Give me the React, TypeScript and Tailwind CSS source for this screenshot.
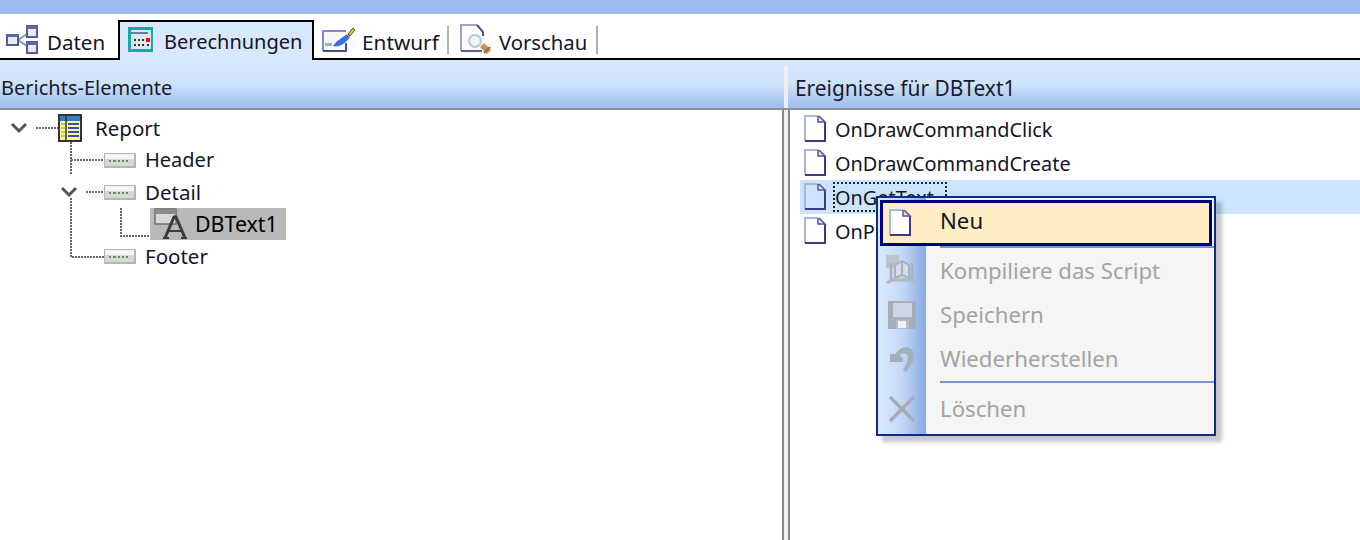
import React from "react";

const Doc = ({ fill = "#ffffff" }: { fill?: string }) => (
  <svg width="24" height="30" viewBox="0 0 24 30" className="shrink-0">
    <path d="M2 2H16L22 8V27H2Z" fill={fill} />
    <path d="M2 27V2H15" fill="none" stroke="#a9b6de" strokeWidth="2" />
    <path d="M2 27H22V8" fill="none" stroke="#3c3a80" strokeWidth="2" />
    <path d="M15 2V8H22L16 2" fill="#dfe4f4" stroke="#56549a" strokeWidth="1.5" />
  </svg>
);

const Band = () => (
  <svg width="32" height="15" viewBox="0 0 32 15" className="shrink-0">
    <rect x="0" y="0" width="32" height="15" fill="#b5b5b5" />
    <rect x="1" y="1" width="29" height="5" fill="#f4f4f4" />
    <rect x="1" y="6" width="29" height="7" fill="#cfe0c8" />
    <path d="M5 8h2M9 8h3M14 8h2M18 8h2M22 8h2" stroke="#777" strokeWidth="2" />
  </svg>
);

const Chevron = () => (
  <svg width="18" height="12" viewBox="0 0 18 12" className="shrink-0">
    <path d="M2 2L9 9L16 2" fill="none" stroke="#555" strokeWidth="3" />
  </svg>
);

const Dots = ({ w }: { w: number }) => (
  <svg width={w} height="2" className="shrink-0">
    <line x1="0" y1="1" x2={w} y2="1" stroke="#666" strokeWidth="2" strokeDasharray="2 1" />
  </svg>
);

const DaTen = () => (
  <svg width="32" height="30" viewBox="0 0 32 30" className="shrink-0">
    <path d="M12 15L21 9M12 15L21 21" stroke="#8a94b8" strokeWidth="2" fill="none" />
    <rect x="1" y="10" width="11" height="10" fill="#e8ecf6" stroke="#555a9c" strokeWidth="2" />
    <rect x="1" y="9" width="12" height="3" fill="#5b65ad" />
    <rect x="21" y="1" width="10" height="11" fill="#e8ecf6" stroke="#555a9c" strokeWidth="2" />
    <rect x="20" y="1" width="12" height="3" fill="#5b65ad" />
    <rect x="21" y="17" width="10" height="11" fill="#e8ecf6" stroke="#555a9c" strokeWidth="2" />
    <rect x="20" y="17" width="12" height="3" fill="#5b65ad" />
  </svg>
);

const Calc = () => (
  <svg width="26" height="26" viewBox="0 0 26 26" className="shrink-0">
    <rect x="0" y="0" width="25" height="25" fill="#14a8a8" />
    <rect x="3" y="3" width="20" height="19" fill="#dfe7ee" />
    <rect x="3" y="5" width="17" height="2" fill="#6a7aa8" />
    <path d="M6 13h2M10 13h2M14 13h2M6 18h2M10 18h2M14 18h2" stroke="#333" strokeWidth="2" />
    <rect x="18" y="11" width="4" height="4" fill="#f01010" />
    <path d="M19 18h2" stroke="#333" strokeWidth="2" />
  </svg>
);

const Pen = () => (
  <svg width="34" height="26" viewBox="0 0 34 26" className="shrink-0">
    <path d="M1 24V4H24" fill="#f5f7fc" stroke="#7a8ad8" strokeWidth="2" />
    <path d="M1 24H24V16" fill="none" stroke="#4a4a98" strokeWidth="2" />
    <rect x="3" y="16" width="7" height="3" fill="#8cc0a0" />
    <path d="M11 19C14 14 20 11 25 7L28 10C25 15 18 21 11 19Z" fill="#3f6fd8" />
    <path d="M26 7L31 1L33 3L28 9Z" fill="#e8b840" stroke="#6a4a20" strokeWidth="1" />
  </svg>
);

const Preview = () => (
  <svg width="32" height="32" viewBox="0 0 32 32" className="shrink-0">
    <path d="M1 1H17V27H1Z" fill="#fcfcff" />
    <path d="M1 27V1H17" fill="none" stroke="#a0a0cc" strokeWidth="2" />
    <path d="M1 27H22" fill="none" stroke="#5a5a9c" strokeWidth="2" />
    <path d="M17 1L23 8V12" fill="none" stroke="#4a4a90" strokeWidth="2" />
    <circle cx="15" cy="17" r="6" fill="#eef6ee" stroke="#b4c8d4" strokeWidth="2" />
    <path d="M22 21L29 28" stroke="#d89038" strokeWidth="6" />
    <path d="M24 29L30 23" stroke="#807060" strokeWidth="2" />
  </svg>
);

const ReportIcon = () => (
  <svg width="24" height="28" viewBox="0 0 24 28" className="shrink-0">
    <rect x="1" y="1" width="22" height="26" fill="#fff6a0" stroke="#333" strokeWidth="2" />
    <rect x="2" y="2" width="20" height="5" fill="#2f7fc8" />
    <path d="M8 1V27" stroke="#333" strokeWidth="1.5" />
    <path d="M3 10H7M3 14H7M3 18H7M3 22H7" stroke="#d8c840" strokeWidth="2" />
    <path d="M10 10H21M10 14H21M10 18H21M10 22H21" stroke="#3050b0" strokeWidth="2" />
  </svg>
);

const TextIcon = () => (
  <svg width="34" height="32" viewBox="0 0 34 32" className="shrink-0">
    <rect x="1" y="1" width="21" height="15" fill="#d8d8d8" stroke="#6e6e6e" strokeWidth="1.5" />
    <rect x="2" y="2" width="19" height="4" fill="#8a8a8a" />
    <path d="M11 30L20 9H22L31 30" fill="none" stroke="#3a3a3a" strokeWidth="3" />
    <path d="M15 23H27" stroke="#3a3a3a" strokeWidth="2" />
    <path d="M9 30H15M27 30H33" stroke="#3a3a3a" strokeWidth="2" />
  </svg>
);

const CompileIcon = () => (
  <svg width="32" height="32" viewBox="0 0 32 32" className="shrink-0">
    <rect x="0" y="0" width="13" height="13" fill="#bcc4d2" />
    <path d="M5 8V25H26V8" fill="none" stroke="#a8b0bc" strokeWidth="2.5" />
    <path d="M9 10L16 6L23 10V23L16 20L9 23Z" fill="#d6dce6" stroke="#a8b0bc" strokeWidth="2" />
    <path d="M16 6V20" stroke="#a8b0bc" strokeWidth="2" />
    <path d="M1 28L6 25H25L30 28" fill="none" stroke="#b0b7c2" strokeWidth="3" />
  </svg>
);

const SaveIcon = () => (
  <svg width="28" height="28" viewBox="0 0 28 28" className="shrink-0">
    <rect x="0" y="0" width="28" height="28" fill="#a6aebb" />
    <rect x="5" y="2" width="19" height="14" fill="#cdd7e8" />
    <rect x="8" y="19" width="13" height="9" fill="#b6bcc8" />
    <rect x="10" y="20" width="8" height="7" fill="#eef1f6" />
  </svg>
);

const UndoIcon = () => (
  <svg width="26" height="28" viewBox="0 0 26 28" className="shrink-0">
    <path d="M10 5C16 0 25 2 25 11C25 17 21 22 17 27L14 25C16 21 19 17 19 12C19 8 14 7 11 10L14 13V17H1V9L6 9Z" fill="#a6aebb" />
  </svg>
);

const XIcon = () => (
  <svg width="26" height="26" viewBox="0 0 26 26" className="shrink-0">
    <path d="M1 1L25 25M25 1L1 25" stroke="#a4acb8" strokeWidth="3.5" />
  </svg>
);

const Sep = () => <div className="w-0.5 h-7 bg-[#b4b0a4]" />;

const PanelHeader = ({ children, className = "" }: { children: React.ReactNode; className?: string }) => (
  <div className={`h-[50px] pt-[8px] flex items-center border-b-2 border-[#8a8f99] bg-gradient-to-b from-[#d9e9fd] via-[#cee2fb] to-[#9dbcec] text-[#1a1a2e] ${className}`}>
    {children}
  </div>
);

const EventRow = ({ label, active, focus }: { label: string; active?: boolean; focus?: boolean }) => (
  <div className={`h-[34px] flex items-center pl-[3px] gap-[8px] ${active ? "bg-[#cce5fd]" : ""}`}>
    <Doc fill={active ? "#cce5fd" : "#ffffff"} />
    <span className={focus ? "h-[30px] w-[114px] flex items-center border-2 border-dotted border-[#222] -ml-0.5 pt-[2px]" : "mt-[2px]"}>{label}</span>
  </div>
);

const MenuItem = ({ icon, label, className = "" }: { icon: React.ReactNode; label: string; className?: string }) => (
  <div className={`flex items-center ${className}`}>
    <div className="w-[48px] flex justify-center">{icon}</div>
    <span className="ml-[14px] text-[#a3a3a3]">{label}</span>
  </div>
);

export default function App() {
  return (
    <div
      className="w-[1360px] h-[540px] overflow-hidden bg-white flex flex-col text-[20px] leading-none text-[#14142a]"
      style={{ fontFamily: '"Noto Sans", "Open Sans", sans-serif' }}
    >
      <div className="h-[14px] shrink-0 bg-[#9ebcf0] border-b border-[#b5b9c2]" />

      <div className="h-[46px] shrink-0 flex items-end border-b-2 border-black pl-[6px]">
        <div className="w-[112px] h-[30px] mb-[3px] flex items-center gap-[9px]">
          <DaTen />
          <span className="mt-[4px] text-[20.5px]">Daten</span>
        </div>
        <div className="-mb-[2px] h-[40px] w-[196px] flex items-center gap-[10px] pl-[8px] pb-[2px] border-2 border-b-0 border-black bg-[#d9e9fd]">
          <Calc />
          <span className="mt-[4px]">Berechnungen</span>
        </div>
        <div className="h-[30px] mb-[3px] ml-[8px] flex items-center">
          <Pen />
          <span className="ml-[6px] mt-[4px] text-[20.8px]">Entwurf</span>
          <div className="ml-[8px] mr-[11px]"><Sep /></div>
          <Preview />
          <span className="ml-[7px] mt-[4px] text-[20.3px]">Vorschau</span>
          <div className="ml-[9px]"><Sep /></div>
        </div>
      </div>

      <div className="flex-1 flex min-h-0">
        <div className="w-[782px] shrink-0 flex flex-col">
          <PanelHeader className="pl-px">Berichts-Elemente</PanelHeader>
          <div className="relative pt-[2px]">
            <svg className="absolute left-0 top-0" width="200" height="160">
              <path d="M71 32V64M71 88V147H104M121 98V126H152" fill="none" stroke="#666" strokeWidth="2" strokeDasharray="2 1" />
              <path d="M71 50H104" fill="none" stroke="#666" strokeWidth="2" strokeDasharray="2 1" />
            </svg>
            <div className="relative h-[32px] flex items-center pl-[10px]">
              <Chevron />
              <div className="ml-[8px]"><Dots w={22} /></div>
              <ReportIcon />
              <span className="ml-[13px] text-[20.5px]">Report</span>
            </div>
            <div className="relative h-[32px] flex items-center pl-[104px]">
              <Band />
              <span className="ml-[9px]">Header</span>
            </div>
            <div className="relative h-[32px] flex items-center pl-[60px]">
              <Chevron />
              <div className="ml-[8px]"><Dots w={18} /></div>
              <Band />
              <span className="ml-[9px] text-[20.5px]">Detail</span>
            </div>
            <div className="relative h-[32px] flex items-center pl-[150px]">
              <div className="w-[136px] h-[32px] bg-[#b9b9b9] flex items-center pl-[4px] text-black">
                <TextIcon />
                <span className="ml-[7px] text-[21.4px]">DBText1</span>
              </div>
            </div>
            <div className="relative h-[32px] flex items-center pl-[104px]">
              <Band />
              <span className="ml-[9px] text-[20.5px]">Footer</span>
            </div>
          </div>
        </div>

        <div className="w-[8px] shrink-0 flex flex-col">
          <div className="h-[50px] flex justify-center border-b-2 border-[#8a8f99] bg-gradient-to-b from-[#d9e9fd] via-[#cee2fb] to-[#9dbcec]">
            <div className="w-[4px] mt-[6px] bg-[#eef0f4]" />
          </div>
          <div className="flex-1 flex">
            <div className="w-[2px] bg-[#8a8a8a]" />
            <div className="w-[4px] bg-[#f2f2f2]" />
            <div className="w-[2px] bg-[#8a8a8a]" />
          </div>
        </div>

        <div className="flex-1 flex flex-col relative">
          <PanelHeader className="pl-[5px] text-[20.9px]">Ereignisse für DBText1</PanelHeader>
          <div className="pt-[2px] pl-[10px] leading-none text-[19.9px]">
            <EventRow label="OnDrawCommandClick" />
            <EventRow label="OnDrawCommandCreate" />
            <EventRow label="OnGetText" active focus />
            <EventRow label="OnPrint" />
          </div>

          <div className="absolute left-[86px] top-[136px] w-[340px] h-[240px] border-2 border-[#0a2d8f] bg-[#f5f5f5] shadow-[6px_6px_4px_rgba(0,0,0,0.22)] flex flex-col text-[22.2px]">
            <div className="absolute left-0 top-0 bottom-0 w-[48px] bg-gradient-to-r from-[#dcebfd] via-[#c3d8f6] to-[#86a9e2]" />
            <div className="relative mx-0.5 mt-0.5 h-[46px] shrink-0 bg-[#ffeec4] border-[3px] border-[#000080] flex items-center pb-[4px] text-[#14142a]">
              <div className="ml-[5px] mt-[4px]"><Doc /></div>
              <span className="ml-[28px]">Neu</span>
            </div>
            <div className="relative h-0.5 shrink-0 ml-[62px] bg-[#7b93cc]" />
            <div className="relative pt-[1px]">
              <MenuItem className="h-[44px]" icon={<CompileIcon />} label="Kompiliere das Script" />
              <MenuItem className="h-[44px]" icon={<SaveIcon />} label="Speichern" />
              <MenuItem className="h-[44px]" icon={<UndoIcon />} label="Wiederherstellen" />
              <div className="h-0.5 ml-[62px] bg-[#7b93cc]" />
              <MenuItem className="h-[46px] pt-[6px]" icon={<XIcon />} label="Löschen" />
            </div>
          </div>
        </div>
      </div>
    </div>
  );
}
